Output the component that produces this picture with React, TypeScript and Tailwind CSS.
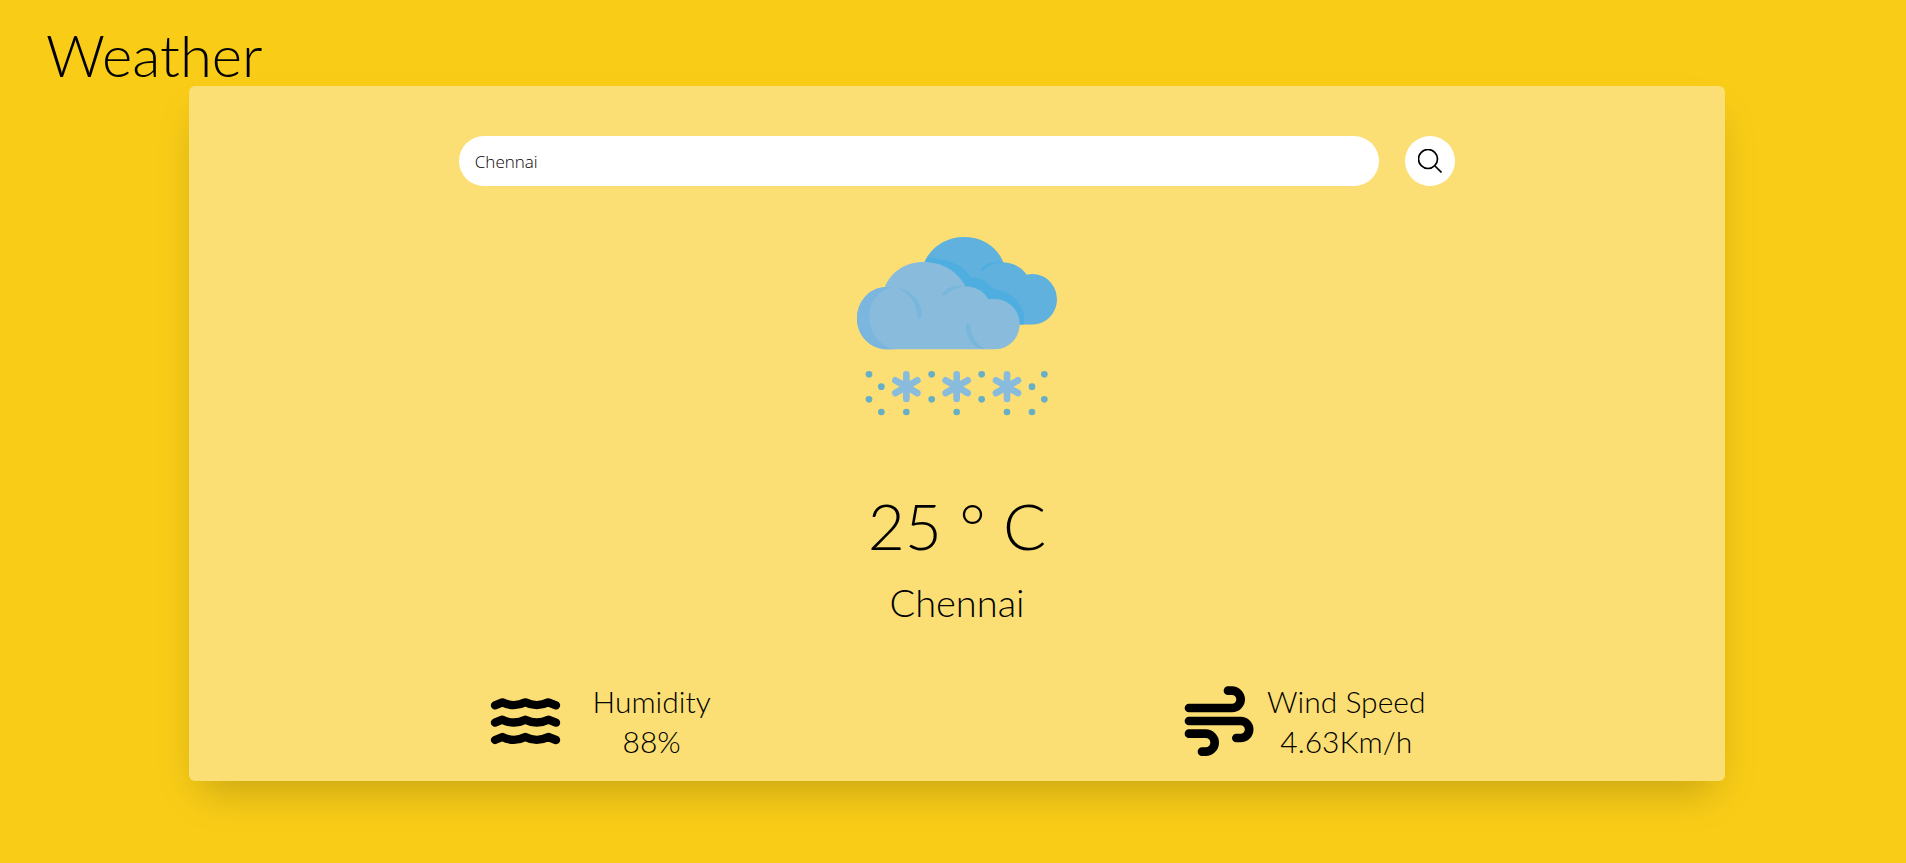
import { useState } from "react";

function SnowCloud() {
  const dots = [
    [87, 463], [275, 463], [425, 463], [613, 463],
    [124, 500], [576, 500],
    [87, 538], [275, 538], [425, 538], [613, 538],
    [124, 576], [199, 576], [350, 576], [501, 576], [576, 576],
  ];
  return (
    <svg viewBox="51 18 600 600" className="size-[200px]" role="img" aria-label="Snow">
      <defs>
        <clipPath id="back-cloud">
          <path d="M249 136C268 84 316 51 372 51C426 51 472 80 490 127C518 128 544 141 560 164C566 163 572 162 577 162C618 162 651 196 651 238C651 280 618 314 577 314H440L300 220Z" />
        </clipPath>
      </defs>
      <g clipPath="url(#back-cloud)">
        <rect x="240" y="40" width="420" height="290" fill="#61b1df" />
        <path d="M246 140C254 100 276 72 312 58L240 40V220L440 330H546C570 280 530 212 462 208C444 186 420 170 394 172C362 128 318 118 266 112Z" fill="#4faee0" />
        <path d="M420 152C430 132 458 120 490 127C464 130 444 138 433 148C429 153 423 156 420 152Z" fill="#4faee0" />
      </g>
      <path d="M134 202C152 156 196 126 250 126C306 126 354 154 376 199C406 199 430 214 446 238C452 237 457 237 463 237C505 237 539 270 539 312C539 354 506 388 465 388H143C92 388 51 347 51 296C51 245 89 203 134 202Z" fill="#89bcdc" />
      <path d="M134 202C142 200 150 201 158 202C118 208 88 244 88 290C88 340 122 380 166 388H143C92 388 51 347 51 296C51 245 89 203 134 202Z" fill="#7ab6dd" />
      <path d="M170 204C212 208 247 244 245 286C244 300 234 300 232 288C230 250 208 218 170 204Z" fill="#79b6dc" />
      <path d="M306 222C316 204 346 192 376 199C352 202 334 210 320 222C314 227 305 228 306 222Z" fill="#79b6dc" />
      <path d="M378 318C378 308 390 308 391 318C392 350 410 374 436 388C400 386 378 356 378 318Z" fill="#79b6dc" />
      <g stroke="#89bcdc" strokeWidth="20" strokeLinecap="round">
        {[199, 350, 501].map((x) => (
          <g key={x} transform={`translate(${x} 500)`}>
            <path d="M0-37V37M-33-19L33 19M-33 19L33-19" />
          </g>
        ))}
      </g>
      <g fill="#67afc6">
        {dots.map(([x, y]) => (
          <circle key={`${x}-${y}`} cx={x} cy={y} r="10" />
        ))}
      </g>
    </svg>
  );
}

function WavesIcon() {
  return (
    <svg viewBox="0 0 216 216" className="size-18" fill="none" stroke="#000" strokeWidth="25" strokeLinecap="round" strokeLinejoin="round" aria-hidden="true">
      {[0, 52, 104].map((y) => (
        <path key={y} transform={`translate(0 ${y})`} d="M18 61L40 52Q75 69 109 52Q143 69 178 52L201 61" />
      ))}
    </svg>
  );
}

function WindIcon() {
  return (
    <svg viewBox="0 0 216 216" className="size-18" fill="none" stroke="#000" strokeWidth="26" strokeLinecap="round" aria-hidden="true">
      <path d="M18 69H147A26 26 0 0 0 147 17H135" />
      <path d="M18 108H173A25 25 0 0 1 173 159H160" />
      <path d="M18 146H68A27 27 0 0 1 68 200H57" />
    </svg>
  );
}

function Metric({ icon, label, value, gap }: { icon: React.ReactNode; label: string; value: string; gap: string }) {
  return (
    <div className={`flex items-center ${gap}`}>
      {icon}
      <div className="text-center text-[30px] leading-10">
        <p>{label}</p>
        <p>{value}</p>
      </div>
    </div>
  );
}

export default function App() {
  const [city, setCity] = useState("Chennai");
  return (
    <div className="min-h-screen bg-[#f9cd17] pl-2 font-['Lato',sans-serif] font-light text-black">
      <h1 className="pt-6 pl-[38px] text-[58px] leading-[62px]">Weather</h1>
      <main className="mx-auto flex max-w-[1536px] flex-col items-center rounded-md bg-[#fbdf74] pt-[50px] pb-5 shadow-[0_20px_40px_-10px_rgba(0,0,0,0.2)]">
        <form className="flex w-[65%] items-center gap-[26px] px-px" onSubmit={(e) => e.preventDefault()}>
          <input
            aria-label="City"
            value={city}
            onChange={(e) => setCity(e.target.value)}
            className="h-[50px] min-w-0 flex-1 rounded-full bg-white px-4 font-['Open_Sans',sans-serif] text-[17px] outline-none"
          />
          <button type="submit" aria-label="Search" className="flex size-[50px] items-center justify-center rounded-full bg-white">
            <svg viewBox="0 0 24 24" className="size-6" fill="none" stroke="#000" strokeWidth="1.7" aria-hidden="true">
              <circle cx="10" cy="10" r="9.5" />
              <path d="M17 17L23.5 23.5" />
            </svg>
          </button>
        </form>
        <div className="mt-10">
          <SnowCloud />
        </div>
        <p className="mt-[68px] text-[64px] leading-[64px]">25 ° C</p>
        <p className="mt-6 text-[38px] leading-10">Chennai</p>
        <div className="mt-[59px] flex w-[61%] justify-between">
          <Metric icon={<WavesIcon />} label="Humidity" value="88%" gap="gap-8" />
          <Metric icon={<WindIcon />} label="Wind Speed" value="4.63Km/h" gap="gap-3" />
        </div>
      </main>
    </div>
  );
}
